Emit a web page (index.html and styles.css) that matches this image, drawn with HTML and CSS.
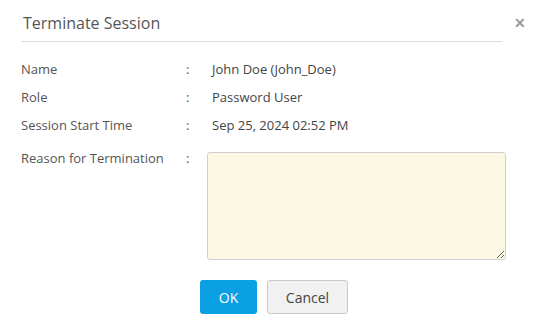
FILE: index.html
```html
<!DOCTYPE html>
<html lang="en">
<head>
  <meta charset="UTF-8">
  <meta name="viewport" content="width=device-width, initial-scale=1.0">
  <title>Terminate Session</title>
  <link rel="stylesheet" href="styles.css">
</head>
<body>
  <div class="dialog">
    <div class="dialog-header">
      <div class="dialog-title">Terminate Session</div>
      <span class="close-btn">&#x2715;</span>
    </div>

    <div class="details">
      <div class="label">Name</div>
      <div class="colon">:</div>
      <div class="value">John Doe (John_Doe)</div>

      <div class="label">Role</div>
      <div class="colon">:</div>
      <div class="value">Password User</div>

      <div class="label">Session Start Time</div>
      <div class="colon">:</div>
      <div class="value">Sep 25, 2024 02:52 PM</div>
    </div>

    <div class="reason-row">
      <label class="label" for="reason">Reason for Termination</label>
      <div class="colon">:</div>
      <textarea id="reason" class="reason"></textarea>
    </div>

    <div class="actions">
      <button class="btn btn-ok">OK</button>
      <button class="btn btn-cancel">Cancel</button>
    </div>
  </div>
</body>
</html>
```

FILE: styles.css
```css
body {
  margin: 0;
  padding: 0;
  font-family: "Open Sans", Arial, sans-serif;
  font-size: 13px;
  color: #555;
  background: #fff;
}

.dialog {
  width: 556px;
  height: 328px;
  box-sizing: border-box;
  padding: 0 18px 0 21px;
}

.dialog-header {
  display: flex;
  align-items: stretch;
  height: 42px;
}

.dialog-title {
  flex: 1;
  padding-left: 2px;
  font-size: 16px;
  color: #555;
  border-bottom: 1px solid #dcdcdc;
  height: 42px;
  box-sizing: border-box;
  line-height: 46px;
}

.close-btn {
  width: 36px;
  text-align: center;
  font-size: 14px;
  font-weight: bold;
  line-height: 46px;
  color: #9a9a9a;
}

.details {
  display: grid;
  grid-template-columns: 165px 26px 1fr;
  grid-auto-rows: 28px;
  align-items: center;
  margin-top: 13px;
}

.label {
  color: #555;
}

.colon {
  color: #555;
}

.value {
  color: #444;
}

.reason-row {
  display: grid;
  grid-template-columns: 165px 21px 299px;
  align-items: start;
  margin-top: 9px;
}

.reason-row .label,
.reason-row .colon {
  line-height: 20px;
}

.reason {
  margin-top: 4px;
  width: 299px;
  height: 108px;
  box-sizing: border-box;
  background: #fdf8e3;
  border: 1px solid #cfcfcf;
  border-radius: 3px;
  padding: 6px;
  font-family: "Open Sans", Arial, sans-serif;
  font-size: 13px;
  resize: both;
}

.actions {
  display: flex;
  justify-content: center;
  gap: 10px;
  margin-top: 20px;
  padding-right: 11px;
}

.btn {
  height: 34px;
  font-family: "Open Sans", Arial, sans-serif;
  font-size: 14px;
  border-radius: 3px;
  cursor: pointer;
  padding: 0;
}

.btn-ok {
  width: 57px;
  background-color: #0b9fe3;
  color: #fff;
  border: none;
}

.btn-cancel {
  width: 81px;
  background-color: #f1f1f1;
  color: #444;
  border: 1px solid #c9c9c9;
}
```
